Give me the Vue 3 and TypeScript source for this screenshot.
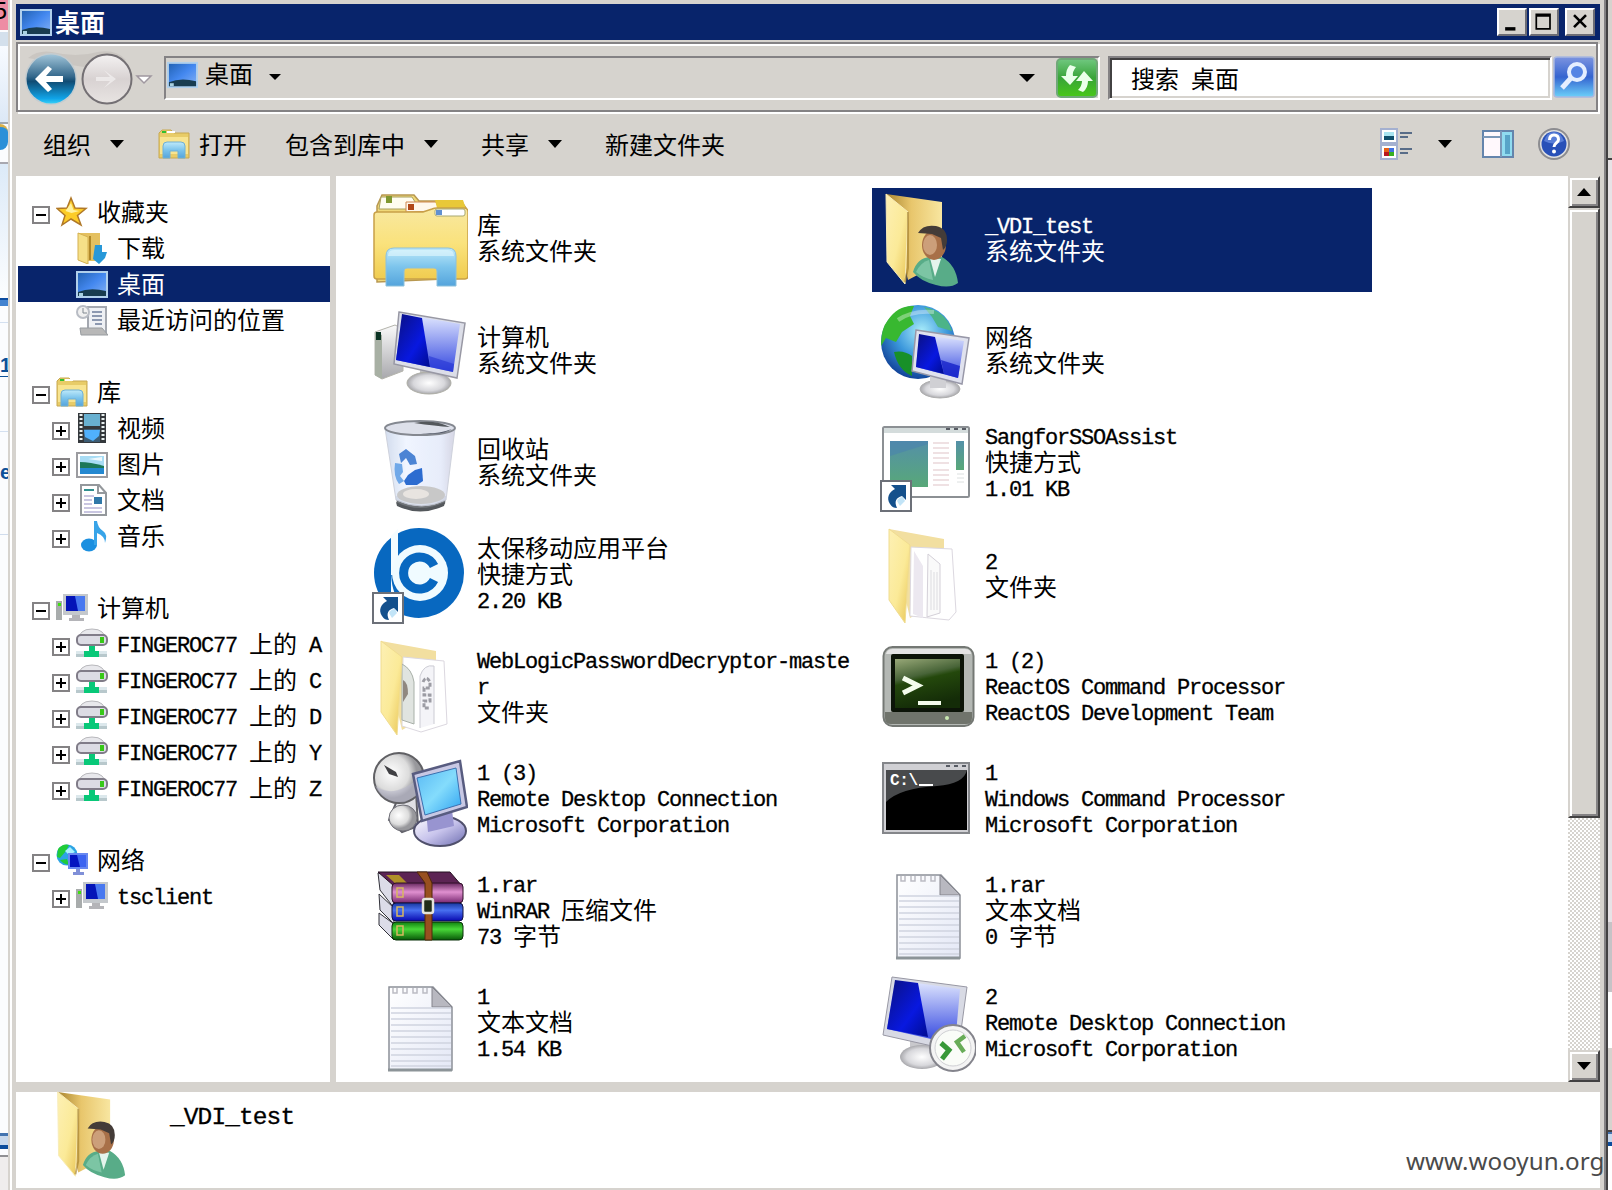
<script setup lang="ts">
import { h } from 'vue'

interface TreeRow { label?: string; icon?: string; level?: number; box?: '+' | '-'; selected?: boolean }
interface FileItem { icon: string; lines: string[]; selected?: boolean }

/* Splits a label into half-width and full-width runs so both sit on a 12px / 24px grid. */
const Txt = (props: { t: string }) =>
  h('span', { class: 'txt' }, (props.t.match(/[\x20-\x7e]+|[^\x20-\x7e]+/g) ?? []).map(run =>
    h('span', { class: run.charCodeAt(0) < 128 ? 'half' : 'full' }, run)))
Txt.props = ['t']

const tree: TreeRow[] = [
  { label: '收藏夹', icon: 's-star', level: 0, box: '-' },
  { label: '下载', icon: 's-down', level: 1 },
  { label: '桌面', icon: 's-desk', level: 1, selected: true },
  { label: '最近访问的位置', icon: 's-recent', level: 1 },
  {},
  { label: '库', icon: 's-lib', level: 0, box: '-' },
  { label: '视频', icon: 's-video', level: 1, box: '+' },
  { label: '图片', icon: 's-pic', level: 1, box: '+' },
  { label: '文档', icon: 's-doc', level: 1, box: '+' },
  { label: '音乐', icon: 's-music', level: 1, box: '+' },
  {},
  { label: '计算机', icon: 's-pc', level: 0, box: '-' },
  ...['A', 'C', 'D', 'Y', 'Z'].map((d): TreeRow => ({ label: 'FINGEROC77 上的 ' + d, icon: 's-drive', level: 1, box: '+' })),
  {},
  { label: '网络', icon: 's-net', level: 0, box: '-' },
  { label: 'tsclient', icon: 's-pc', level: 1, box: '+' },
]

const files: FileItem[] = [
  { icon: 'b-lib', lines: ['库', '系统文件夹'] },
  { icon: 'b-user', lines: ['_VDI_test', '系统文件夹'], selected: true },
  { icon: 'b-pc', lines: ['计算机', '系统文件夹'] },
  { icon: 'b-net', lines: ['网络', '系统文件夹'] },
  { icon: 'b-bin', lines: ['回收站', '系统文件夹'] },
  { icon: 'b-app', lines: ['SangforSSOAssist', '快捷方式', '1.01 KB'] },
  { icon: 'b-tb', lines: ['太保移动应用平台', '快捷方式', '2.20 KB'] },
  { icon: 'b-folder', lines: ['2', '文件夹'] },
  { icon: 'b-folder2', lines: ['WebLogicPasswordDecryptor-master', '文件夹'] },
  { icon: 'b-ros', lines: ['1 (2)', 'ReactOS Command Processor', 'ReactOS Development Team'] },
  { icon: 'b-rdc', lines: ['1 (3)', 'Remote Desktop Connection', 'Microsoft Corporation'] },
  { icon: 'b-cmd', lines: ['1', 'Windows Command Processor', 'Microsoft Corporation'] },
  { icon: 'b-rar', lines: ['1.rar', 'WinRAR 压缩文件', '73 字节'] },
  { icon: 'b-txt', lines: ['1.rar', '文本文档', '0 字节'] },
  { icon: 'b-txt', lines: ['1', '文本文档', '1.54 KB'] },
  { icon: 'b-rdp', lines: ['2', 'Remote Desktop Connection', 'Microsoft Corporation'] },
]
</script>

<template>
  <div class="screen">
    <svg class="defs" width="0" height="0">
      <defs>
        <linearGradient id="gGlare" x1="0" y1="0" x2="0" y2="1"><stop offset="0" stop-color="#e4eaff" /><stop offset="1" stop-color="#3448e0" /></linearGradient>
        <linearGradient id="gDark" x1="0" y1="0" x2="1" y2="1"><stop offset="0" stop-color="#0a1080" /><stop offset=".6" stop-color="#0818e0" /><stop offset="1" stop-color="#000c90" /></linearGradient>
        <linearGradient id="gYel" x1="0" y1="0" x2="0" y2="1"><stop offset="0" stop-color="#f8e8a0" /><stop offset=".5" stop-color="#fae27c" /><stop offset="1" stop-color="#f0cc50" /></linearGradient>
        <linearGradient id="gFlap" x1="0" y1="0" x2="1" y2="1"><stop offset="0" stop-color="#fdf0b4" /><stop offset=".55" stop-color="#fbea98" /><stop offset="1" stop-color="#e8c454" /></linearGradient>
        <linearGradient id="gBack" x1="0" y1="0" x2="1" y2="0"><stop offset="0" stop-color="#a88430" /><stop offset=".45" stop-color="#e8c66c" /><stop offset="1" stop-color="#f8e6a0" /></linearGradient>
        <linearGradient id="gBlue" x1="0" y1="0" x2="0" y2="1"><stop offset="0" stop-color="#bfeafa" /><stop offset=".5" stop-color="#7cc4ec" /><stop offset="1" stop-color="#54a4dc" /></linearGradient>
        <linearGradient id="gSilver" x1="0" y1="0" x2="0" y2="1"><stop offset="0" stop-color="#fafafa" /><stop offset="1" stop-color="#a8a8ac" /></linearGradient>
        <radialGradient id="gBase"><stop offset="0" stop-color="#fff" /><stop offset=".7" stop-color="#d8d8dc" /><stop offset="1" stop-color="#a8a8ac" /></radialGradient>
        <radialGradient id="gGlobe" cx=".55" cy=".35" r=".7"><stop offset="0" stop-color="#a8ecfa" /><stop offset=".5" stop-color="#3c98dc" /><stop offset="1" stop-color="#0c3890" /></radialGradient>
        <linearGradient id="gDesk" x1="0" y1="0" x2="1" y2="1"><stop offset="0" stop-color="#2060b0" /><stop offset=".5" stop-color="#4488f0" /><stop offset="1" stop-color="#88b4f4" /></linearGradient>
        <linearGradient id="gNav" x1="0" y1="0" x2="0" y2="1"><stop offset="0" stop-color="#a0c4d8" /><stop offset=".45" stop-color="#34688c" /><stop offset=".55" stop-color="#104c74" /><stop offset=".9" stop-color="#10a4e8" /><stop offset="1" stop-color="#38d0f8" /></linearGradient>
        <linearGradient id="gNav2" x1="0" y1="0" x2="0" y2="1"><stop offset="0" stop-color="#f4f2f2" /><stop offset=".5" stop-color="#d8d2d2" /><stop offset="1" stop-color="#e8e4e2" /></linearGradient>
        <linearGradient id="gGreen" x1="0" y1="0" x2="0" y2="1"><stop offset="0" stop-color="#70c880" /><stop offset=".5" stop-color="#38a438" /><stop offset="1" stop-color="#48c818" /></linearGradient>
        <linearGradient id="gSearch" x1="0" y1="0" x2="0" y2="1"><stop offset="0" stop-color="#7c94e0" /><stop offset=".5" stop-color="#3464d0" /><stop offset="1" stop-color="#6cd0fa" /></linearGradient>
        <linearGradient id="gPanel" x1="0" y1="0" x2="0" y2="1"><stop offset="0" stop-color="#5490a8" /><stop offset="1" stop-color="#58a878" /></linearGradient>
        <linearGradient id="gPaper" x1="0" y1="0" x2="1" y2="1"><stop offset="0" stop-color="#ffffff" /><stop offset="1" stop-color="#e4e8f6" /></linearGradient>
        <linearGradient id="gTerm" x1="0" y1="0" x2=".3" y2="1"><stop offset="0" stop-color="#98a878" /><stop offset=".4" stop-color="#486438" /><stop offset=".5" stop-color="#24480c" /><stop offset="1" stop-color="#142c08" /></linearGradient>
        <linearGradient id="gSky" x1="0" y1="0" x2="1" y2="1"><stop offset="0" stop-color="#58b8f4" /><stop offset=".5" stop-color="#84dcfc" /><stop offset="1" stop-color="#2ca0f0" /></linearGradient>
        <linearGradient id="gB1" x1="0" y1="0" x2="0" y2="1"><stop offset="0" stop-color="#682860" /><stop offset=".45" stop-color="#e090d0" /><stop offset="1" stop-color="#782870" /></linearGradient>
        <linearGradient id="gB2" x1="0" y1="0" x2="0" y2="1"><stop offset="0" stop-color="#1838a0" /><stop offset=".4" stop-color="#4870f0" /><stop offset="1" stop-color="#0808b0" /></linearGradient>
        <linearGradient id="gB3" x1="0" y1="0" x2="0" y2="1"><stop offset="0" stop-color="#108010" /><stop offset=".4" stop-color="#48d838" /><stop offset="1" stop-color="#085808" /></linearGradient>
        <linearGradient id="gBin" x1="0" y1="0" x2="1" y2="0"><stop offset="0" stop-color="#cdd8ec" /><stop offset=".3" stop-color="#eef4ff" /><stop offset=".8" stop-color="#e4eafa" /><stop offset="1" stop-color="#d0d0e0" /></linearGradient>
        <radialGradient id="gDish" cx=".35" cy=".4"><stop offset="0" stop-color="#fff" /><stop offset=".7" stop-color="#dcdcdc" /><stop offset="1" stop-color="#98989c" /></radialGradient>
        <linearGradient id="gViolet" x1="0" y1="0" x2="1" y2="1"><stop offset="0" stop-color="#fff" /><stop offset=".5" stop-color="#c8c4ec" /><stop offset="1" stop-color="#6c6cb0" /></linearGradient>
      </defs>

      <symbol id="badge" viewBox="0 0 32 32">
        <rect x="1" y="1" width="30" height="30" fill="#fff" stroke="#6c7078" stroke-width="2" />
        <path d="M11 5h15v15l-4-4c-6 2-8 5-5 12-3 0-5-1-7-4-4-6-1-12 5-15z" fill="#14508c" /><path d="M17 21q2-4 6-4l2 4-5 5z" fill="#a8d8f4" opacity=".7" />
      </symbol>

      <symbol id="b-lib" viewBox="0 0 96 96">
        <path d="M5 90V14l5-11h32l5 6h42l5 7v70z" fill="#f0d878" stroke="#b89850" stroke-width="1.5" />
        <path d="M9 5h31l5 8-8 4H7z" fill="#fffdf0" stroke="#a8a060" /><rect x="14" y="4" width="6" height="7" fill="#809830" />
        <path d="M34 10h30l4 9-34 1z" fill="#fff8ec" stroke="#d08850" /><rect x="36" y="12" width="6" height="6" fill="#b04818" />
        <path d="M63 8h28l4 12H66z" fill="#e8c838" />
        <path d="M2 23q0-3 3-3h46l9-3q2-1 5-1h27q4 0 4 4v64q0 3-3 3H5q-3 0-3-3z" fill="url(#gYel)" stroke="#c8a048" stroke-width="1.5" />
        <rect x="63" y="17" width="30" height="7" rx="2" fill="#fff" stroke="#a8a870" /><rect x="64" y="18" width="6" height="5" fill="#6090d0" />
        <path d="M14 94V64q0-8 8-8h54q8 0 8 8v30H65V79q0-3-3-3H35q-3 0-3 3v15z" fill="url(#gBlue)" stroke="#8cc0dc" />
        <path d="M16 64q0-6 6-6h54q6 0 6 6z" fill="#e4f8fe" opacity=".6" />
      </symbol>

      <symbol id="b-user" viewBox="0 0 96 96">
        <path d="M6 2 62 10v60L28 88z" fill="url(#gBack)" /><path d="M6 2 28 20 25 92 7 70z" fill="url(#gFlap)" stroke="#f8ecb8" />
        <path d="M28 20v56l-3 14" fill="none" stroke="#a07c28" stroke-width="2" opacity=".6" />
        <path d="M33 80q4-14 17-15h12q14 8 16 26-8 6-22 2-16-4-23-13z" fill="#58ac88" /><path d="M50 66l5 19 6-18z" fill="#e4f4ec" />
        <path d="M36 80q5-10 13-12l4 20q-10-2-17-8z" fill="#8cd0b0" opacity=".7" />
        <ellipse cx="54" cy="53" rx="12" ry="15" fill="#a87048" /><ellipse cx="50" cy="53" rx="7" ry="10" fill="#dcb490" opacity=".7" />
        <path d="M38 41q5-9 18-7 11 2 11 14 0 7-4 10l-2-12-9-4z" fill="#443c38" />
      </symbol>

      <symbol id="b-pc" viewBox="0 0 96 96">
        <path d="M3 28l20-7 8 4v42L10 75l-7-4z" fill="url(#gSilver)" stroke="#b4b4ac" /><path d="M3 28l7 3v44l-7-4z" fill="#a8b0a4" /><path d="M4 28h5v8H4z" fill="#0c3424" />
        <path d="M48 66l16 4-2 10H48z" fill="#c0c0c0" /><ellipse cx="57" cy="79" rx="22" ry="11" fill="url(#gBase)" stroke="#b0b0a8" />
        <path d="M27 8 93 19 85 74 22 60z" fill="#dcdee8" stroke="#9898a4" stroke-width="1.5" />
        <path d="M30 10 88 20 81 68 24 56z" fill="url(#gGlare)" /><path d="M30 10 50 14 58 63 24 56z" fill="url(#gDark)" /><path d="M58 63 57 52 82 60 81 68z" fill="#2434d4" opacity=".6" />
      </symbol>

      <symbol id="b-net" viewBox="0 0 96 96">
        <circle cx="38" cy="38" r="37" fill="url(#gGlobe)" />
        <path d="M8 16q10-15 26-14l-4 10 4 8-12 8-6 10-10-4-5 8Q1 24 8 16z" fill="#38b830" /><path d="M44 3q22 4 28 24l-14-4-6-10z" fill="#4cb488" /><path d="M14 48q10-2 18 4v20q-14-6-18-24z" fill="#189028" />
        <path d="M18 16q14-10 36-8" stroke="#fff" stroke-width="4" opacity=".35" fill="none" />
        <ellipse cx="60" cy="85" rx="20" ry="9" fill="url(#gBase)" stroke="#b0b0b0" /><path d="M50 72h16v12H50z" fill="#d0d0d4" />
        <path d="M36 26 89 34 82 80 32 67z" fill="#e0e2ee" stroke="#9898a8" stroke-width="1.5" /><path d="M39 30 84 37 78 74 36 63z" fill="url(#gGlare)" /><path d="M39 30 55 33 64 70 36 63z" fill="url(#gDark)" /><path d="M64 70 61 56 80 62 78 74z" fill="#1420c8" opacity=".8" />
      </symbol>

      <symbol id="b-bin" viewBox="0 0 96 96">
        <path d="M24 80 50 76 74 80 73 88Q50 100 25 88z" fill="#707478" /><path d="M13 12 24 84Q50 96 74 84L83 12z" fill="url(#gBin)" opacity=".88" stroke="#c8ccd8" />
        <ellipse cx="49" cy="79" rx="24" ry="9" fill="#c8c8c8" /><ellipse cx="44" cy="78" rx="13" ry="5" fill="#e8e4e0" />
        <path d="M24 86q24 12 49 0l-1 4q-24 11-47 0z" fill="#54585c" />
        <ellipse cx="48" cy="12" rx="35" ry="7" fill="#dde0ea" stroke="#848890" stroke-width="2" /><path d="M42 7q20-4 36 4-14-1-36-4z" fill="#54585c" /><path d="M44 17q20 2 36-4-10 7-36 4z" fill="#4c5260" />
        <path d="M27 38l7-5 9 7 2 8-7 1-4-7-5 5z" fill="#4c84d4" /><path d="M23 47l7 1 1 8-3 4 4 5-5 3q-6-8-4-21z" fill="#70a8e8" /><path d="M36 59l7-5 7-2 1 13-6 4H34l-2-4z" fill="#2c6cd0" />
      </symbol>

      <symbol id="b-app" viewBox="0 0 96 96">
        <rect x="3" y="11" width="86" height="70" rx="1.5" fill="#fff" stroke="#8c9094" stroke-width="2" /><path d="M4 12h84v5H4z" fill="#d4dcdc" /><path d="M66 13h4m4 0h4m4 0h4" stroke="#585c64" stroke-width="2" />
        <rect x="10" y="25" width="38" height="46" fill="url(#gPanel)" /><path d="M10 40 48 28v-3H10z" fill="#4880b0" opacity=".5" />
        <path d="M53 27h16M53 32h16M53 37h16M53 42h16M53 47h16M53 54h16M53 59h16M53 64h16M53 69h16" stroke="#ead8da" stroke-width="1.5" />
        <rect x="76" y="25" width="8" height="29" fill="url(#gPanel)" /><path d="M77 58h7m-7 4h7m-7 4h7" stroke="#dce0e0" />
        <use href="#badge" x="0" y="64" width="32" height="32" />
      </symbol>

      <symbol id="b-tb" viewBox="0 0 96 96">
        <circle cx="47" cy="45" r="45" fill="#0868c0" /><path d="M19 8l7-7v46h-7z" fill="#f4fcff" /><circle cx="48" cy="45" r="28" fill="#f0fbff" />
        <path d="M62 38A16 16 0 1 0 62 52" fill="none" stroke="#0868c0" stroke-width="9" /><path d="M19 42q0 22 9 32l-9-6z" fill="#f4fcff" />
        <use href="#badge" x="0" y="64" width="32" height="32" />
      </symbol>

      <symbol id="b-folder" viewBox="0 0 96 96">
        <path d="M9 1 64 11v60L30 90z" fill="#f2dfa0" /><path d="M31 19 72 21 76 84 69 92 30 88z" fill="#fff" stroke="#dcd8e0" /><path d="M34 23l9 15v52l-10-4z" fill="#ece8f0" /><path d="M48 26l12 10v49l-13 4z" fill="#fafafa" stroke="#d4d0d8" />
        <path d="M51 42v40M54 44v38M57 44v38" stroke="#dcdce0" /><path d="M9 1 30 17 25 95 9 72z" fill="url(#gFlap)" stroke="#f0dc90" />
      </symbol>

      <symbol id="b-folder2" viewBox="0 0 96 96">
        <path d="M9 1 64 11v60L30 90z" fill="#f2dfa0" /><path d="M31 17 72 21 75 84 49 92 30 86z" fill="#fff" stroke="#dcd8e0" /><path d="M30 24q10 5 12 18v42l-12-4z" fill="#e0e4e0" stroke="#a8b0a8" /><path d="M31 40q5 2 5 14l-5 8z" fill="#908880" />
        <path d="M48 88V36q4-12 14-10v58" fill="#f4f4f8" stroke="#ccccd4" /><path d="M51 42q3-7 7 0v6h-6v7h6v6h-6v7h6" fill="none" stroke="#9c9ca4" stroke-width="3" stroke-dasharray="4 1.500" /><path d="M9 1 30 17 25 95 9 72z" fill="url(#gFlap)" stroke="#f0dc90" />
      </symbol>

      <symbol id="b-ros" viewBox="0 0 96 96">
        <rect x="3.500" y="7" width="90" height="79" rx="9" fill="#b4b8b4" stroke="#747874" stroke-width="2" /><path d="M6 14q1-5 7-5h72q6 0 6 5z" fill="#e4e4e4" /><path d="M5 72h87v6q0 6-6 6H11q-6 0-6-6z" fill="#70746c" />
        <rect x="11" y="14" width="73" height="58" rx="2" fill="#0c1408" /><rect x="15" y="19" width="65" height="49" fill="url(#gTerm)" />
        <path d="M23 38 38 45.500 23 53" fill="none" stroke="#f4fcec" stroke-width="5" /><path d="M38 63h23" stroke="#f4fcec" stroke-width="4" /><circle cx="67" cy="78" r="2" fill="#c8e8b0" />
      </symbol>

      <symbol id="b-rdc" viewBox="0 0 96 96">
        <path d="M26 46 44 40 46 74 30 80 17 68z" fill="#e0e0e4" stroke="#606068" stroke-width="2" /><ellipse cx="31" cy="66" rx="14" ry="13" fill="url(#gDish)" stroke="#707078" />
        <circle cx="27" cy="26" r="25" fill="url(#gDish)" stroke="#606064" stroke-width="2" /><path d="M3 34q20 14 46-10l2 16-18 10Q12 52 3 34z" fill="#b8b8cc" opacity=".55" /><path d="M12 13l12 7 2 5-9-3z" fill="#404044" />
        <ellipse cx="68" cy="79" rx="26" ry="15" fill="url(#gViolet)" stroke="#50506c" stroke-width="2" /><path d="M54 58h26l2 16-26 6z" fill="#9894d0" />
        <path d="M41 22 88 9 95 55 50 69z" fill="#c8c8e4" stroke="#585c80" stroke-width="2.500" /><path d="M45 26 84 16 89 52 53 63z" fill="url(#gSky)" stroke="#3c70b0" />
      </symbol>

      <symbol id="b-cmd" viewBox="0 0 96 96">
        <rect x="3" y="11" width="86" height="70" fill="#d0d0d4" stroke="#84868a" stroke-width="2" /><path d="M66 14h4m4 0h4m4 0h4" stroke="#585c64" stroke-width="2" /><path d="M6 18h81v60H6z" fill="#000" /><path d="M6 18h81q-3 14-30 16Q20 36 6 50z" fill="#484a4c" />
        <text x="10" y="33" font-family="Liberation Mono, monospace" font-size="16" font-weight="bold" fill="#fff" textLength="28">C:\</text><path d="M39 33h14" stroke="#fff" stroke-width="2" />
      </symbol>

      <symbol id="b-rar" viewBox="0 0 96 96">
        <path d="M6 9 20 12 22 44 8 26zM7 30 22 44 22 60 8 46zM7 49 22 60 22 76 7 61z" fill="#dcdce8" stroke="#303038" />
        <path d="M6 8H78L90 22H22z" fill="#5c2454" stroke="#241020" /><path d="M14 11h13l8 8-11 1z" fill="#b09028" />
        <rect x="20" y="19" width="71" height="20" rx="4" fill="url(#gB1)" stroke="#301028" /><rect x="20" y="39" width="71" height="18" rx="4" fill="url(#gB2)" stroke="#101040" /><rect x="20" y="58" width="71" height="18" rx="4" fill="url(#gB3)" stroke="#083008" />
        <path d="M25 24h6v9h-6zM25 43h6v9h-6zM25 62h6v9h-6z" fill="none" stroke="#d8b860" stroke-width="1.500" />
        <path d="M45 8h10l5 11v57h-7V19z" fill="#985020" stroke="#502808" /><rect x="51" y="35" width="10" height="14" rx="2" fill="#202c18" stroke="#e4e4dc" stroke-width="2.500" />
      </symbol>

      <symbol id="b-txt" viewBox="0 0 96 96">
        <path d="M17 11H61L80 31V94H17z" fill="url(#gPaper)" stroke="#8c9098" stroke-width="1.500" /><path d="M16 94h64" stroke="#8c9498" stroke-width="3" />
        <path d="M60 11 80 31H60z" fill="#b8b8c0" stroke="#84848c" /><path d="M19 32h60M19 37h60M19 43h60M19 49h60M19 55h60M19 61h60M19 67h60M19 73h60M19 79h60M19 85h60M19 90h60" stroke="#d0d3e0" stroke-width="1.500" />
        <path d="M21 12v5h4v-5M31 12v5h4v-5M41 12v5h4v-5M51 12v5h4v-5" stroke="#bcbcc4" fill="none" stroke-width="1.500" />
      </symbol>

      <symbol id="b-rdp" viewBox="0 0 96 96">
        <path d="M30 62h22v18H30z" fill="#c8c8cc" /><ellipse cx="42" cy="81" rx="22" ry="12" fill="url(#gBase)" />
        <path d="M12 1 87 11 80 62 70 74 3 59z" fill="#d8dae4" stroke="#9898a4" /><path d="M15 4 80 13 76 58 60 65 7 53z" fill="url(#gGlare)" /><path d="M15 4 38 7 48 61 7 53z" fill="url(#gDark)" />
        <circle cx="73" cy="72" r="23" fill="#f4f4f4" stroke="#84848c" stroke-width="2" /><circle cx="73" cy="72" r="18" fill="#fafcf8" stroke="#d0d0d4" /><path d="M61 67l8 7-7 9" fill="none" stroke="#389838" stroke-width="5" /><path d="M85 60l-8 6 7 10" fill="none" stroke="#68ac58" stroke-width="4.500" />
      </symbol>

      <symbol id="s-desk" viewBox="0 0 32 32"><rect x="1" y="4" width="30" height="25" fill="url(#gDesk)" stroke="#b0d0ec" stroke-width="2" /><path d="M2 24q12-5 28-1v5H2z" fill="#183c50" /><path d="M3 25h4v3H3z" fill="#a8d0e0" /></symbol>
      <symbol id="s-star" viewBox="0 0 32 32"><path d="M15 2l4 10 11 .500-8.500 7L25 29l-10-6-9 6 3-9.500L1 12.500 11 12z" fill="#fccc28" stroke="#b07828" stroke-width="1.500" /><path d="M15 7l2.500 7 6 1-8 2-6-2z" fill="#fff2a0" /></symbol>
      <symbol id="s-down" viewBox="0 0 32 32"><path d="M2 1h22v28H12z" fill="#e4c060" /><path d="M2 1l10 4v27L2 28z" fill="#f6e088" stroke="#d4b050" /><path d="M14 4v24" stroke="#b08828" stroke-width="2" /><path d="M19 13h7v7h5l-2 6-6 6-6-5 1-7z" fill="#2898d8" /></symbol>
      <symbol id="s-recent" viewBox="0 0 32 32"><path d="M12 3h18v26H12z" fill="#eef0f4" stroke="#a4a8b0" stroke-width="2" /><circle cx="7" cy="8" r="6" fill="#f0f0f0" stroke="#b8bcc4" stroke-width="2" /><path d="M7 4v5h4" stroke="#808890" fill="none" /><path d="M16 8h10M16 12h10M16 16h10M19 20h7" stroke="#8c98b0" stroke-width="2" /><path d="M4 24h22l6 7H5z" fill="#b8b8b8" stroke="#989ca0" /></symbol>
      <symbol id="s-lib" viewBox="0 0 32 32"><path d="M1 5l3-3h9l3 3h15v25H1z" fill="#e8cc68" stroke="#c8a850" /><path d="M2 9h28v17H2z" fill="#f8e490" /><path d="M4 3h4v2H4z" fill="#30c030" /><path d="M9 3h8v2H9z" fill="#fff" /><path d="M5 30V18q0-4 4-4h14q4 0 4 4v12h-7v-7h-8v7z" fill="url(#gBlue)" stroke="#70b0d4" /></symbol>
      <symbol id="s-video" viewBox="0 0 32 32"><path d="M2 1h28v30H2z" fill="#34383c" /><path d="M8 2h16v12H8z" fill="#68b0d0" /><path d="M8 17h16v13H8z" fill="#3c5c74" /><path d="M8 18h16l-1 6-6 5-8-4z" fill="#50b0fc" /><path d="M5 2v28M27 2v28" stroke="#e8f0f0" stroke-width="3" stroke-dasharray="2 2" /></symbol>
      <symbol id="s-pic" viewBox="0 0 32 32"><rect x="1" y="5" width="30" height="24" fill="#fff" stroke="#9c9ca0" stroke-width="2" /><path d="M4 8h24v18H4z" fill="#a8dcf4" /><path d="M4 14q10 0 24 4v4H4z" fill="#1c7858" /><path d="M4 20h24v6H4z" fill="#2488d0" /><path d="M12 11l14-2v4z" fill="#fff" opacity=".8" /></symbol>
      <symbol id="s-doc" viewBox="0 0 32 32"><path d="M5 1h18l7 8v22H5z" fill="#fff" stroke="#94989c" stroke-width="2" /><path d="M22 1v8h7" fill="none" stroke="#94989c" stroke-width="2" /><path d="M8 6h10" stroke="#309090" stroke-width="2" /><path d="M8 12h10M8 16h8M8 20h8M8 24h18M8 28h18" stroke="#b8b4d8" stroke-width="1.500" /><path d="M18 13h8v7h-8z" fill="#3078a8" /></symbol>
      <symbol id="s-music" viewBox="0 0 32 32"><ellipse cx="13" cy="25" rx="8" ry="6.500" fill="#1c90e0" /><path d="M18 25V1h3q1 7 6 10t2 12q0-7-8-10v12z" fill="#38a4e8" /></symbol>
      <symbol id="s-pc" viewBox="0 0 32 32"><rect x="0" y="9" width="6" height="19" fill="#a8acac" /><rect x="2" y="11" width="3" height="3" fill="#40e010" /><path d="M7 2h25v21H7z" fill="#c4c8cc" /><path d="M10 4h19v15H10z" fill="#4878f0" /><path d="M10 4h9l3 15H10z" fill="#0414b8" /><path d="M16 23h8v3h4v3H13v-3h3z" fill="#b4b4b8" /></symbol>
      <symbol id="s-drive" viewBox="0 0 32 32"><path d="M6 4q3-3 10-3t10 3l4 5H2z" fill="#e8e8ec" stroke="#b8b8bc" /><rect x="1" y="7" width="30" height="10" rx="4" fill="#dcdce4" stroke="#807c88" stroke-width="2" /><path d="M24 9h4v6h-4z" fill="#38c818" /><path d="M0 23h31v6H0z" fill="#b8c8cc" /><path d="M0 23h31v3H0z" fill="#dce8ec" /><path d="M13 18h6v5h4v6H8v-6h5z" fill="#08c878" /></symbol>
      <symbol id="s-net" viewBox="0 0 32 32"><circle cx="11" cy="11" r="10.500" fill="#2ca4e4" /><path d="M2 5q5-6 11-4l-3 6-6 7-3-1zM4 16l7-1 2 6q-6-1-9-5z" fill="#20cc38" /><path d="M9 7l5-4 5 5-6 3z" fill="#a8f0fc" /><path d="M12 9h20v16H12z" fill="#6888f0" /><path d="M14 11h16v12H14z" fill="#3c64f0" /><path d="M14 11h7l3 12H14z" fill="#0414c0" /><path d="M20 25h4v3h4v3H17v-3h3z" fill="#8090d8" /></symbol>
    </svg>

    <div class="behind-left">
      <i class="pink">5</i><i class="b1"></i><i class="b2"></i><i class="globe"></i><i class="b3"></i><i class="blue"></i>
      <i class="b4"></i><i class="one">1</i><i class="b5"></i><i class="ie">e</i><i class="b6"></i><i class="b7"></i><i class="b8"></i>
    </div>

    <div class="window">
      <header class="title">
        <svg class="title-icon"><use href="#s-desk" /></svg>
        <b class="title-text">桌面</b>
        <div class="caption">
          <svg viewBox="0 0 30 28"><path d="M7 20h12v4H7z" /></svg>
          <svg viewBox="0 0 30 28"><path d="M5 4h18v19H5zM7 8v13h14V8z" fill-rule="evenodd" /></svg>
          <svg class="close" viewBox="0 0 30 28"><path d="M8 6l14 14M22 6L8 20" stroke="#000" stroke-width="3" /></svg>
        </div>
      </header>

      <div class="navbar">
        <svg class="nav" viewBox="0 0 136 60">
          <path d="M8 10q10-8 24-6 24 6 46 0 18-3 28 8L70 20z" fill="#c4c0bc" opacity=".7" />
          <circle cx="31" cy="31" r="26" fill="#c4ccd0" /><circle cx="31" cy="31" r="24.500" fill="url(#gNav)" />
          <path d="M15 31l13-13 4 3-6 7h17v6H26l6 7-4 3z" fill="#fff" />
          <circle cx="87" cy="31" r="24.500" fill="url(#gNav2)" stroke="#747074" stroke-width="2" /><path d="M76 29h14l-6-7 12 9-12 9 6-7H76z" fill="#f0eeee" opacity=".8" />
          <path d="M117 28h14l-7 7z" fill="#fff" stroke="#a098a0" stroke-width="1.500" />
        </svg>
        <div class="address">
          <svg class="addr-icon"><use href="#s-desk" /></svg>
          <Txt t="桌面" class="addr-text" />
          <i class="tri small"></i>
          <i class="tri last"></i>
          <svg class="refresh" viewBox="0 0 42 40"><rect x="1" y="1" width="40" height="38" rx="4" fill="url(#gGreen)" stroke="#70a878" stroke-width="2" /><path d="M14 7l6 2q-4 5-3 9h5l-8 9-9-9h5q0-7 4-11zM28 13l9 10h-5q0 7-5 11l-5-2q4-4 4-9h-6z" fill="#eaffea" /></svg>
        </div>
        <div class="search"><Txt t="搜索 桌面" /></div>
        <svg class="go" viewBox="0 0 42 42"><rect x="1" y="1" width="40" height="40" rx="3" fill="url(#gSearch)" stroke="#a8b8e0" stroke-width="1.500" /><circle cx="24" cy="16" r="8" fill="#5484e4" stroke="#e4eeff" stroke-width="4" /><path d="M18 22L9 32" stroke="#e4eeff" stroke-width="5" /></svg>
      </div>

      <div class="toolbar">
        <span class="cmd c1"><Txt t="组织" /><i class="tri"></i></span>
        <span class="cmd c2"><svg><use href="#s-lib" /></svg><Txt t="打开" /></span>
        <span class="cmd c3"><Txt t="包含到库中" /><i class="tri"></i></span>
        <span class="cmd c4"><Txt t="共享" /><i class="tri"></i></span>
        <span class="cmd c5"><Txt t="新建文件夹" /></span>
        <svg class="views" viewBox="0 0 32 32"><path d="M1 1h16v14H1zM1 17h16v14H1z" fill="#fff" stroke="#a4b0d0" stroke-width="2" /><path d="M4 4h10v8H4z" fill="#a8e4f0" /><path d="M4 8h10v4H4z" fill="#10506c" /><path d="M4 20h5v4H4z" fill="#e86018" /><path d="M9 20h5v4H9z" fill="#4070e0" /><path d="M4 24h5v4H4z" fill="#b81820" /><path d="M9 24h5v4H9z" fill="#38b020" /><path d="M20 5h12M20 9h8M20 21h12M20 25h8" stroke="#586c88" stroke-width="2" /></svg>
        <i class="tri"></i>
        <svg class="pane" viewBox="0 0 32 28"><path d="M1 1h30v26H1z" fill="#fff8fc" stroke="#6484ac" stroke-width="2" /><path d="M1 7h18M19 1v26" stroke="#7c98b8" stroke-width="2" /><path d="M20 2h10v24H20z" fill="#90dcf0" /><path d="M23 5h5v19h-5z" fill="#58a4c8" /></svg>
        <svg class="help" viewBox="0 0 32 32"><circle cx="16" cy="16" r="15" fill="#e0e0e0" stroke="#8c8c90" stroke-width="2" /><circle cx="16" cy="16" r="12.500" fill="#2850b8" /><path d="M6 13q3-9 10-9t10 9q-10 5-20 0z" fill="#6c90e4" opacity=".7" /><path d="M11.500 12q0-5 4.500-5t4.500 4.500c0 3.500-4.500 3.500-4.500 7.500" fill="none" stroke="#fff" stroke-width="3" /><circle cx="16" cy="23.500" r="2" fill="#fff" /></svg>
      </div>

      <div class="body">
        <nav class="tree">
          <div v-for="(r, i) in tree" :key="i" class="row" :class="{ child: r.level === 1, sel: r.selected }">
            <template v-if="r.label">
              <span class="box" :class="{ none: !r.box, plus: r.box === '+' }"></span>
              <svg class="row-icon"><use :href="'#' + r.icon" /></svg>
              <Txt :t="r.label" />
            </template>
          </div>
        </nav>
        <main class="files">
          <div v-for="(f, i) in files" :key="i" class="file" :class="{ sel: f.selected }">
            <svg class="file-icon"><use :href="'#' + f.icon" /></svg>
            <div class="file-text"><div v-for="(l, j) in f.lines" :key="j"><Txt :t="l" /></div></div>
          </div>
        </main>
        <div class="scroll">
          <div class="btn"><i class="tri up"></i></div>
          <div class="btn thumb"></div>
          <div class="track"></div>
          <div class="btn"><i class="tri"></i></div>
        </div>
      </div>

      <footer class="details">
        <svg class="detail-icon"><use href="#b-user" /></svg>
        <Txt t="_VDI_test" class="detail-text" />
      </footer>
    </div>

    <div class="behind-right"><i class="r1"></i><i class="r2"></i><i class="r3"></i><i class="r4"></i><i class="r5"></i><i class="r6"></i></div>
    <div class="mark">www.wooyun.org</div>
  </div>
</template>

<style>
/* Runs take no line height of their own, so mixed lines keep the parent's pitch. */
.txt { white-space: pre-wrap; word-break: break-all; }
.txt .half, .txt .full { line-height: 0; }
.txt .half { font-family: "Liberation Mono", monospace; font-size: 22px; letter-spacing: -1.2px; vertical-align: 1px; -webkit-text-stroke: 0.3px currentColor; }
.txt .full { font-family: "Noto Sans CJK SC", sans-serif; font-size: 24px; }
</style>

<style scoped>
.screen { position: relative; width: 1612px; height: 1190px; display: flex; overflow: hidden; background: #fff; color: #000; font-family: "Noto Sans CJK SC", sans-serif; font-size: 24px; line-height: 26px; }
.screen * { box-sizing: border-box; }
.defs { position: absolute; }
svg { display: block; flex: none; }
i { font-style: normal; display: block; }

.behind-left { width: 8px; display: flex; flex-direction: column; overflow: hidden; background: #fbfcfe; flex: none; }
.behind-left i { flex: none; width: 8px; overflow: hidden; }
.pink { height: 30px; background: #ee8ca4; line-height: 18px; text-indent: -6px; }
.b1 { height: 14px; background: #d4e0ec; margin-top: 2px; }
.b2 { height: 78px; background: linear-gradient(#f8fbff, #dce8f6); border-bottom: 2px solid #a0a8b0; }
.globe { height: 26px; background: #2c90d8; border-top: 3px solid #d8b048; border-radius: 0 10px 10px 0; }
.b3 { height: 148px; margin-top: 12px; border-top: 2px solid #a8a8b0; background: linear-gradient(#dceaf8, #fff); }
.blue { height: 8px; background: #4484d0; border-top: 2px solid #0c4ca0; margin-top: -12px; }
.b4 { height: 1px; background: #d4e0f0; margin-top: 16px; }
.one { height: 24px; color: #0c5098; font: bold 20px/24px "Liberation Sans", sans-serif; margin-top: 30px; border-bottom: 1px solid #0c5098; }
.b5 { height: 1px; background: #d4e0f0; margin-top: 54px; }
.ie { height: 30px; color: #0c5098; font: bold 20px/24px "Liberation Sans", sans-serif; margin-top: 28px; }
.b6 { height: 1px; background: #d0dced; margin-top: 44px; }
.b7 { height: 16px; margin-top: 598px; border-top: 3px solid #4474b0; border-bottom: 4px solid #0c4c9c; background: #c8d8ec; }
.b8 { flex: 1 !important; margin-top: 6px; border-top: 2px solid #909094; background: #efeded; }

.window { width: 1600px; height: 1190px; flex: none; display: flex; flex-direction: column; background: #d6d3ce; padding: 4px 4px 2px 4px; border-left: 4px solid; border-right: 4px solid; border-image: linear-gradient(90deg, #d6d3ce 0 2px, #fff 2px 4px, #d6d3ce 4px 1596px, #848284 1596px 1598px, #424142 1598px) 0 4 0 4; }
.title { height: 36px; background: #08246b; display: flex; align-items: center; padding: 0 5px 0 4px; flex: none; }
.title-icon { width: 32px; height: 32px; }
.title-text { color: #fff; font-size: 25px; margin-left: 3px; line-height: 34px; padding-bottom: 2px; flex: 1; }
.caption { display: flex; }
.caption svg { width: 30px; height: 28px; background: #d6d3ce; border: 2px solid; border-color: #fff #6c6c74 #6c6c74 #fff; margin-left: 2px; }
.caption .close { margin-left: 6px; }

.navbar { width: 1582px; height: 70px; margin: 2px 0; border: 2px solid #848284; box-shadow: inset 2px 2px #fff, 2px 2px #fff; display: flex; align-items: flex-start; flex: none; }
.nav { width: 136px; height: 60px; margin: 4px 0 0 2px; }
.address { width: 936px; height: 44px; margin: 12px 0 0 8px; border: 2px solid; border-color: #848284 #fff #fff #848284; display: flex; align-items: center; }
.addr-icon { width: 31px; height: 31px; margin-left: 1px; margin-top: -8px; }
.addr-text { margin-left: 7px; margin-top: -10px; }
.tri { width: 14px; height: 8px; background: #000; clip-path: polygon(0 0, 100% 0, 50% 100%); flex: none; }
.tri.small { width: 12px; height: 6px; margin-left: 16px; margin-top: -2px; }
.tri.last { margin-left: auto; width: 16px; }
.refresh { width: 42px; height: 40px; margin-left: 21px; }
.search { width: 444px; height: 44px; margin: 12px 0 0 8px; background: #fff; border: 2px solid; border-color: #848284 #fff #fff #848284; box-shadow: inset 2px 2px #424142, inset -2px -2px #d6d3ce; padding: 7px 0 0 21px; }
.go { width: 42px; height: 42px; margin: 12px 0 0 1px; }

.toolbar { height: 62px; display: flex; align-items: center; padding-bottom: 2px; flex: none; }
.cmd { display: flex; align-items: center; flex: none; }
.cmd svg { width: 32px; height: 32px; margin-right: 9px; }
.c1 { width: 142px; padding-left: 27px; }
.c2 { width: 126px; }
.c3 { width: 197px; padding-left: 1px; }
.c4 { width: 124px; padding-left: 0; }
.cmd .tri { margin-left: 19px; }
.views { width: 32px; height: 32px; margin-left: auto; margin-right: 26px; }
.pane { width: 32px; height: 28px; margin-left: 30px; }
.help { width: 32px; height: 32px; margin: 0 30px 0 24px; }

.body { height: 906px; display: flex; flex: none; }
.tree { width: 314px; background: #fff; padding-top: 18px; flex: none; }
.row { height: 36px; padding-left: 16px; display: flex; align-items: center; white-space: nowrap; }
.row .txt { margin-top: -3px; white-space: pre; }
.row.child { padding-left: 36px; }
.row.sel { background: #08246b; color: #fff; margin-left: 2px; padding-left: 34px; }
.box { width: 18px; height: 18px; border: 2px solid #848284; margin-top: 6px; flex: none; background: linear-gradient(#000, #000) center / 10px 2px no-repeat; }
.box.plus { background: linear-gradient(#000, #000) center / 10px 2px no-repeat, linear-gradient(#000, #000) center / 2px 10px no-repeat; }
.box.none { visibility: hidden; }
.row-icon { width: 32px; height: 32px; margin: 0 9px 0 6px; }

.files { width: 1232px; margin-left: 6px; background: #fff; display: grid; grid-template-columns: 500px 500px; column-gap: 8px; grid-auto-rows: 104px; row-gap: 8px; padding: 12px 0 0 28px; flex: none; }
.file { display: flex; align-items: center; padding-left: 8px; }
.file.sel { background: #08246b; color: #fff; }
.file-icon { width: 96px; height: 96px; }
.file-text { margin-left: 9px; width: 379px; line-height: 26px; padding-bottom: 6px; }

.scroll { width: 32px; display: flex; flex-direction: column; }
.btn { height: 32px; background: #d6d3ce; border: 2px solid; border-color: #d6d3ce #424142 #424142 #d6d3ce; box-shadow: inset 2px 2px #fff, inset -2px -2px #848284; display: grid; place-items: center; flex: none; }
.thumb { height: 610px; }
.track { flex: 1; background: repeating-conic-gradient(#d6d3ce 0 25%, #fff 0 50%) 0 0 / 4px 4px; }
.tri.up { clip-path: polygon(0 100%, 50% 0, 100% 100%); }

.details { height: 96px; margin-top: 10px; background: #fff; display: flex; align-items: flex-start; flex: none; }
.detail-icon { width: 90px; height: 90px; margin: -2px 0 0 36px; }
.detail-text { margin: 10px 0 0 28px; }
.detail-text :deep(.half) { font-size: 24.5px; letter-spacing: -0.9px; }

.behind-right { width: 4px; display: flex; flex-direction: column; flex: none; background: #fff; }
.behind-right i { flex: none; }
.r1 { height: 160px; background: #d6d3ce; border-bottom: 2px solid #424142; }
.r2 { height: 762px; background: #e7e3e6; }
.r3 { height: 70px; background: #c6c3c6; }
.r4 { height: 56px; background: #fff; }
.r5 { height: 84px; background: #d6d3ce; border-bottom: 2px solid #424142; }
.r6 { height: 14px; background: #c8d8ec; border-top: 2px solid #4474b0; border-bottom: 4px solid #0c4c9c; }
.mark { position: absolute; left: 1406px; top: 1145px; font: 24.2px/32px "Noto Sans", sans-serif; color: #4a4a4a; white-space: nowrap; }
</style>
